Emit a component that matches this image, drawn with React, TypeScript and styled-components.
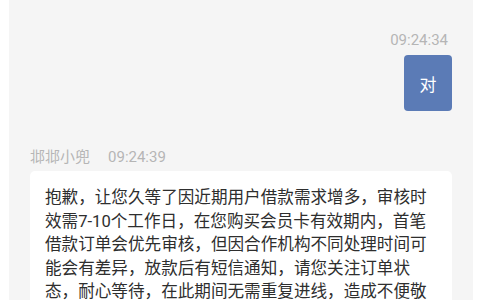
import React from "react";
import styled, { createGlobalStyle } from "styled-components";

const Global = createGlobalStyle`
  html, body { margin: 0; padding: 0; background: #ffffff; }
  body { font-family: Roboto, "Noto Sans CJK SC", sans-serif; }
`;

const Page = styled.div`
  display: flex;
  padding: 0 7px 0 9px;
  height: 300px;
  overflow: hidden;
  background: #ffffff;
`;

const Panel = styled.div`
  flex: 1;
  display: flex;
  flex-direction: column;
  padding: 0 21px;
  background: #f5f5f5;
`;

const PrevTail = styled.div`
  width: 248px;
  height: 2px;
  margin-left: 1px;
  background: #ffffff;
  border-radius: 0 0 4px 4px;
`;

const Time = styled.div<{ $align: "left" | "right"; $top: number }>`
  margin-top: ${(p) => p.$top}px;
  display: flex;
  justify-content: ${(p) => (p.$align === "right" ? "flex-end" : "flex-start")};
  align-items: center;
  gap: 18px;
  font-size: 15px;
  line-height: 20px;
  color: #b5b5b5;
  padding-right: ${(p) => (p.$align === "right" ? "4px" : "0")};
`;

const SentRow = styled.div`
  display: flex;
  justify-content: flex-end;
  margin-top: 5px;
`;

const SentBubble = styled.div`
  width: 48px;
  height: 56px;
  display: flex;
  align-items: center;
  justify-content: center;
  background: #5b7bb6;
  color: #ffffff;
  border-radius: 4px;
  font-size: 17px;
`;

const ReceivedBubble = styled.div`
  margin-top: 4px;
  background: #ffffff;
  border-radius: 5px;
  padding: 15px;
  font-size: 16.6px;
  line-height: 23.5px;
  color: #2e2e2e;
`;

export default function App() {
  return (
    <>
      <Global />
      <Page>
        <Panel>
          <PrevTail />
          <Time $align="right" $top={30}>09:24:34</Time>
          <SentRow>
            <SentBubble>对</SentBubble>
          </SentRow>
          <Time $align="left" $top={36}>
            <span>邶邶小兜</span>
            <span>09:24:39</span>
          </Time>
          <ReceivedBubble>
            抱歉，让您久等了因近期用户借款需求增多，审核时效需7-10个工作日，在您购买会员卡有效期内，首笔借款订单会优先审核，但因合作机构不同处理时间可能会有差异，放款后有短信通知，请您关注订单状态，耐心等待，在此期间无需重复进线，造成不便敬请谅解。
          </ReceivedBubble>
        </Panel>
      </Page>
    </>
  );
}
